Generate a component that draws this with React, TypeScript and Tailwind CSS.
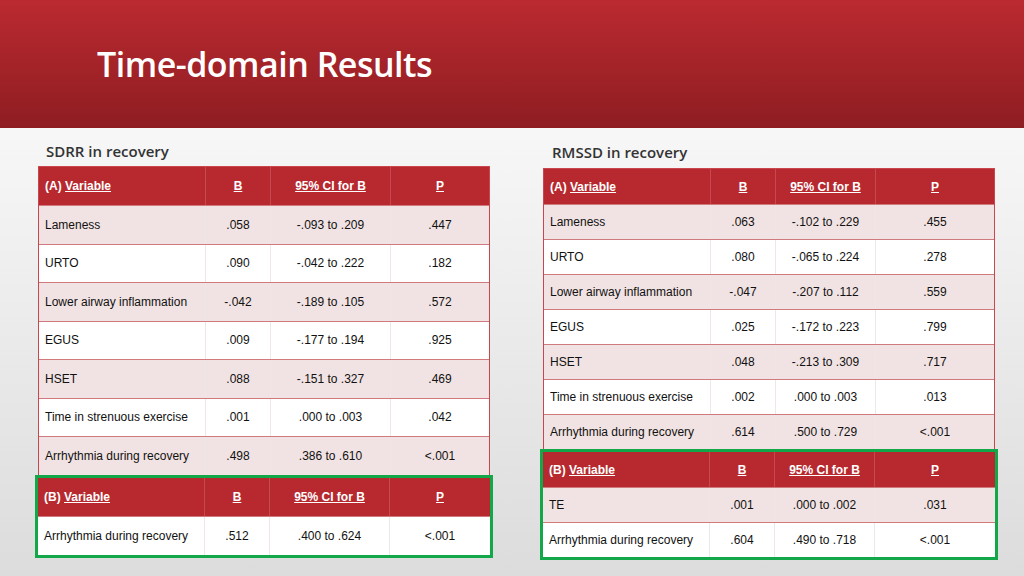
import React from "react";

type Row = [string, string, string, string];
const F = { fontFamily: '"Liberation Sans", Arial, sans-serif' };

const leftA: Row[] = [
  ["Lameness", ".058", "-.093 to .209", ".447"],
  ["URTO", ".090", "-.042 to .222", ".182"],
  ["Lower airway inflammation", "-.042", "-.189 to .105", ".572"],
  ["EGUS", ".009", "-.177 to .194", ".925"],
  ["HSET", ".088", "-.151 to .327", ".469"],
  ["Time in strenuous exercise", ".001", ".000 to .003", ".042"],
  ["Arrhythmia during recovery", ".498", ".386 to .610", "<.001"],
];
const leftB: Row[] = [["Arrhythmia during recovery", ".512", ".400 to .624", "<.001"]];
const rightA: Row[] = [
  ["Lameness", ".063", "-.102 to .229", ".455"],
  ["URTO", ".080", "-.065 to .224", ".278"],
  ["Lower airway inflammation", "-.047", "-.207 to .112", ".559"],
  ["EGUS", ".025", "-.172 to .223", ".799"],
  ["HSET", ".048", "-.213 to .309", ".717"],
  ["Time in strenuous exercise", ".002", ".000 to .003", ".013"],
  ["Arrhythmia during recovery", ".614", ".500 to .729", "<.001"],
];
const rightB: Row[] = [
  ["TE", ".001", ".000 to .002", ".031"],
  ["Arrhythmia during recovery", ".604", ".490 to .718", "<.001"],
];

function Header({ label, h, cols }: { label: string; h: string; cols: string }) {
  return (
    <div className={`grid ${cols} ${h} bg-[#b7292f] text-white text-[12px] font-bold`}>
      <div className="flex items-center pl-[6px] border-r border-[#c44a4f]">
        {label}&nbsp;<span className="underline">Variable</span>
      </div>
      <div className="flex items-center justify-center underline border-r border-[#c44a4f]">B</div>
      <div className="flex items-center justify-center underline border-r border-[#c44a4f]">95% CI for B</div>
      <div className="flex items-center justify-center underline">P</div>
    </div>
  );
}

function DataRow({ r, pink, h, cols }: { r: Row; pink: boolean; h: string; cols: string }) {
  return (
    <div
      className={`grid ${cols} ${h} text-[12px] text-[#111] border-t border-[#d07a7d] ${
        pink ? "bg-[#f1e3e3]" : "bg-white"
      }`}
    >
      <div className="flex items-center pl-[6px] border-r border-[#efe6e6]">{r[0]}</div>
      <div className="flex items-center justify-center border-r border-[#efe6e6]">{r[1]}</div>
      <div className="flex items-center justify-center border-r border-[#efe6e6]">{r[2]}</div>
      <div className="flex items-center justify-center">{r[3]}</div>
    </div>
  );
}

function Table({
  a, b, h, hh, cols, bPink,
}: { a: Row[]; b: Row[]; h: string; hh: string; cols: string; bPink: boolean[] }) {
  return (
    <div className="flex flex-col w-[452px]">
      <div className="border border-[#c9474c] border-b-0">
        <Header label="(A)" h={hh} cols={cols} />
        {a.map((r, i) => (
          <DataRow key={i} r={r} pink={i % 2 === 0} h={h} cols={cols} />
        ))}
      </div>
      <div className="-mx-[3px] border-[3px] border-[#12a84a]">
        <Header label="(B)" h={h} cols={cols} />
        {b.map((r, i) => (
          <DataRow key={i} r={r} pink={bPink[i]} h={h} cols={cols} />
        ))}
      </div>
    </div>
  );
}

export default function App() {
  return (
    <div style={F} className="w-[1024px] h-[576px] flex flex-col overflow-hidden bg-gradient-to-b from-white to-[#dcdcdc]">
      <div className="h-[128px] shrink-0 bg-gradient-to-b from-[#bb2a30] to-[#8e1d22] flex items-center pl-[97px]">
        <h1 className="text-white text-[34px] font-semibold tracking-[-0.5px]" style={{ fontFamily: '"Open Sans", sans-serif' }}>
          Time-domain Results
        </h1>
      </div>
      <div className="flex">
        <div className="ml-[38px] flex flex-col">
          <div className="h-[38px] flex items-center pl-[8px] pt-[8px] text-[15px] text-[#333] font-semibold" style={{ fontFamily: '"Open Sans", sans-serif' }}>SDRR in recovery</div>
          <Table a={leftA} b={leftB} h="h-[38.5px]" hh="h-[38px]" cols="grid-cols-[167px_65px_120px_1fr]" bPink={[false]} />
        </div>
        <div className="ml-[53px] flex flex-col">
          <div className="h-[40px] flex items-center pl-[9px] pt-[8px] text-[15px] text-[#333] font-semibold" style={{ fontFamily: '"Open Sans", sans-serif' }}>RMSSD in recovery</div>
          <Table a={rightA} b={rightB} h="h-[35px]" hh="h-[35px]" cols="grid-cols-[167px_65px_100px_1fr]" bPink={[true, false]} />
        </div>
      </div>
    </div>
  );
}
